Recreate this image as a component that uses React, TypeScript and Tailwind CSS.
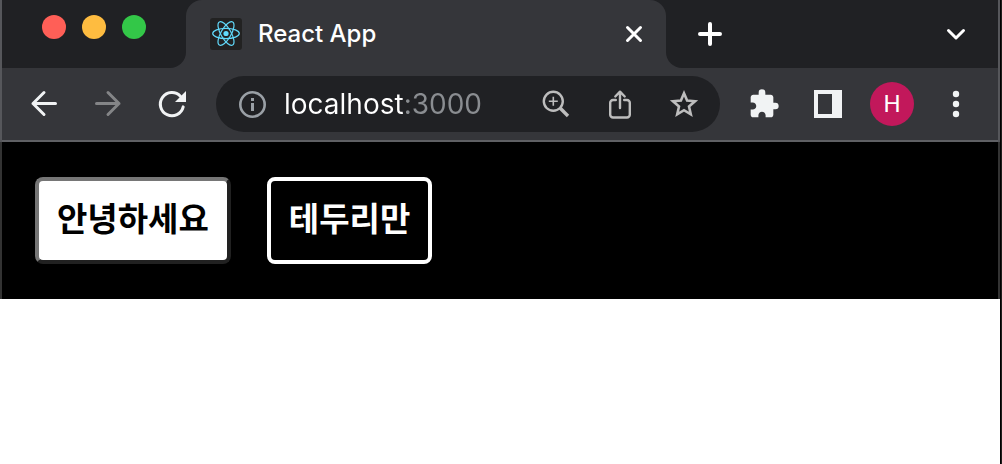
import type { ReactNode } from "react";

type IconButtonProps = { label: string; className?: string; disabled?: boolean; children: ReactNode };

function IconButton({ label, className = "", disabled, children }: IconButtonProps) {
  return (
    <button type="button" aria-label={label} disabled={disabled} className={`flex size-8 shrink-0 items-center justify-center ${className}`}>
      {children}
    </button>
  );
}

function ReactLogo() {
  return (
    <svg viewBox="0 0 32 32" className="size-8 shrink-0" fill="none" aria-hidden="true">
      <rect width="32" height="32" rx="3" fill="#222222" />
      <g stroke="#61dafb" strokeWidth="1.2">
        <ellipse cx="16" cy="15.5" rx="13.3" ry="5.1" />
        <ellipse cx="16" cy="15.5" rx="13.3" ry="5.1" transform="rotate(60 16 15.5)" />
        <ellipse cx="16" cy="15.5" rx="13.3" ry="5.1" transform="rotate(120 16 15.5)" />
      </g>
      <circle cx="16" cy="15.5" r="2.6" fill="#61dafb" />
    </svg>
  );
}

function TabStrip() {
  return (
    <div className="flex h-[68px]">
      <div className="flex w-[184px] shrink-0 items-start gap-4 rounded-br-2xl bg-[#202124] pt-[15px] pl-10">
        <button type="button" aria-label="Close window" className="size-6 rounded-full bg-[#ff5f57]" />
        <button type="button" aria-label="Minimize window" className="size-6 rounded-full bg-[#febc40]" />
        <button type="button" aria-label="Zoom window" className="size-6 rounded-full bg-[#33c748]" />
      </div>
      <div className="w-[480px] min-w-0 bg-[#202124]">
        <div className="flex h-full items-center rounded-t-2xl bg-[#35363a] pr-4 pl-6">
          <ReactLogo />
          <span className="ml-4 flex-1 truncate text-2xl font-medium text-white">React App</span>
          <IconButton label="Close tab">
            <svg viewBox="0 0 32 32" className="size-8" stroke="#fff" strokeWidth="3" strokeLinecap="round">
              <path d="M9.5 9.5 22.5 22.5M22.5 9.5 9.5 22.5" />
            </svg>
          </IconButton>
        </div>
      </div>
      <div className="flex flex-1 items-center justify-between rounded-bl-2xl bg-[#202124] pr-[26px] pl-7">
        <IconButton label="New tab">
          <svg viewBox="0 0 32 32" className="size-8" stroke="#fff" strokeWidth="4" strokeLinecap="round">
            <path d="M6 16H26M16 6V26" />
          </svg>
        </IconButton>
        <IconButton label="Search tabs">
          <svg viewBox="0 0 32 32" className="size-8" fill="none" stroke="#fff" strokeWidth="3" strokeLinecap="round" strokeLinejoin="round">
            <path d="M8.5 12.5 16 20 23.5 12.5" />
          </svg>
        </IconButton>
      </div>
    </div>
  );
}

function AddressBar() {
  return (
    <div className="flex h-14 min-w-0 flex-1 items-center rounded-full bg-[#202124] pr-5 pl-5">
      <IconButton label="View site information">
        <svg viewBox="0 0 32 32" className="size-8" fill="none">
          <circle cx="16.500" cy="16.500" r="12.2" stroke="#9aa0a6" strokeWidth="2.6" />
          <path d="M16.500 15V23M16.500 10V13" stroke="#9aa0a6" strokeWidth="3" />
        </svg>
      </IconButton>
      <input
        type="text"
        aria-label="Address"
        defaultValue="localhost:3000"
        className="ml-4 min-w-0 flex-1 bg-[linear-gradient(90deg,#fff_120px,#8a8d91_120px)] bg-clip-text text-[28px] text-transparent outline-none"
      />
      <div className="flex gap-8">
        <IconButton label="Zoom">
          <svg viewBox="0 0 32 32" className="size-8" fill="none" stroke="#bdbdbd">
            <circle cx="13.3" cy="13.3" r="9.5" strokeWidth="2.4" />
            <path d="M20.3 20.3 28 28" strokeWidth="3.4" />
            <path d="M8.8 13.3H17.8M13.3 8.8V17.8" strokeWidth="1.6" />
          </svg>
        </IconButton>
        <IconButton label="Share">
          <svg viewBox="0 0 32 32" className="size-8" fill="none" stroke="#bdbdbd" strokeWidth="2.4" strokeLinecap="round" strokeLinejoin="round">
            <path d="M11.800 12H9A2.800 2.800 0 0 0 6.200 14.800V26.700A2.800 2.800 0 0 0 9 29.500H23A2.800 2.800 0 0 0 25.800 26.700V14.800A2.800 2.800 0 0 0 23 12H20.200" />
            <path d="M16 20V4M11.3 8.500 16 3.700 20.700 8.500" />
          </svg>
        </IconButton>
        <IconButton label="Bookmark this tab">
          <svg viewBox="0 0 32 32" className="size-8" fill="none" stroke="#bdbdbd" strokeWidth="2.6" strokeLinejoin="miter">
            <path d="M16 5.3 19.1 12.6 27 13.3 21 18.5 22.8 26.3 16 22.2 9.2 26.3 11 18.500 5 13.3 12.900 12.6Z" />
          </svg>
        </IconButton>
      </div>
    </div>
  );
}

function Toolbar() {
  return (
    <div className="flex h-[74px] items-center border-b-2 border-[#5f6064] pr-[26px] pl-[26px]">
      <div className="mr-7 flex gap-8">
        <IconButton label="Back">
          <svg viewBox="0 0 32 32" className="size-8" fill="none" stroke="#f1f3f4" strokeWidth="3" strokeLinecap="round" strokeLinejoin="round">
            <path d="M27.5 15.5H5M16 4.5 5 15.5 16 26.5" />
          </svg>
        </IconButton>
        <IconButton label="Forward" disabled>
          <svg viewBox="0 0 32 32" className="size-8" fill="none" stroke="#848587" strokeWidth="3" strokeLinecap="round" strokeLinejoin="round">
            <path d="M4.5 15.5H27M16 4.5 27 15.5 16 26.5" />
          </svg>
        </IconButton>
        <IconButton label="Reload">
          <svg viewBox="0 0 32 32" className="size-8" fill="none">
            <path d="M24.6 8.2A11.6 11.6 0 1 0 27.4 18.9" transform="translate(-.2 0)" stroke="#f1f3f4" strokeWidth="3" strokeLinecap="round" />
            <path d="M30 3V14H19Z" fill="#f1f3f4" />
          </svg>
        </IconButton>
      </div>
      <AddressBar />
      <div className="ml-7 flex items-center">
        <IconButton label="Extensions">
          <svg viewBox="0 0 24 24" className="size-8" fill="#f1f3f4">
            <path d="M20.5 11H19V7c0-1.100-.9-2-2-2h-4V3.500a2.500 2.500 0 0 0-5 0V5H4c-1.100 0-1.990.9-1.990 2v3.800H3.500c1.490 0 2.700 1.210 2.700 2.700s-1.210 2.700-2.700 2.700H2V20c0 1.100.9 2 2 2h3.800v-1.500c0-1.490 1.210-2.700 2.700-2.700s2.700 1.210 2.700 2.700V22H17c1.100 0 2-.9 2-2v-4h1.500a2.500 2.500 0 0 0 0-5Z" />
          </svg>
        </IconButton>
        <IconButton label="Side panel" className="ml-8">
          <svg viewBox="0 0 32 32" className="size-8">
            <path fillRule="evenodd" fill="#f1f3f4" d="M2 2H30V30H2ZM6 6V26H20V6Z" />
          </svg>
        </IconButton>
        <button type="button" aria-label="Profile H" className="ml-[26px] flex size-11 items-center justify-center rounded-full bg-[#c2185b] font-['Roboto',sans-serif] text-2xl text-white">
          H
        </button>
        <IconButton label="Menu" className="ml-[26px]">
          <svg viewBox="0 0 32 32" className="size-8" fill="#f1f3f4">
            <circle cx="16" cy="6" r="3.200" />
            <circle cx="16" cy="16" r="3.200" />
            <circle cx="16" cy="26" r="3.200" />
          </svg>
        </IconButton>
      </div>
    </div>
  );
}

export default function App() {
  return (
    <div className="min-h-screen border-r border-[#201f1d] bg-white font-['Inter','Noto_Sans_CJK_KR',sans-serif]">
      <div className="min-h-screen border-r border-black">
        <header className="border-x-2 border-[#56575b] bg-[#35363a]">
          <TabStrip />
          <Toolbar />
        </header>
        <main className="flex gap-9 border-x-2 border-[#333333] bg-black px-[33px] py-[35px] font-['Noto_Sans_CJK_KR',sans-serif] text-[33px] leading-[48px] font-bold">
          <button type="button" className="rounded-lg border-4 border-t-[#767676] border-r-[#212121] border-b-[#212121] border-l-[#767676] bg-white px-[18px] pt-3 pb-[19px] text-black">
            안녕하세요
          </button>
          <button type="button" className="rounded-lg border-4 border-white bg-black px-[18px] pt-3 pb-[19px] text-white">
            테두리만
          </button>
        </main>
      </div>
    </div>
  );
}
